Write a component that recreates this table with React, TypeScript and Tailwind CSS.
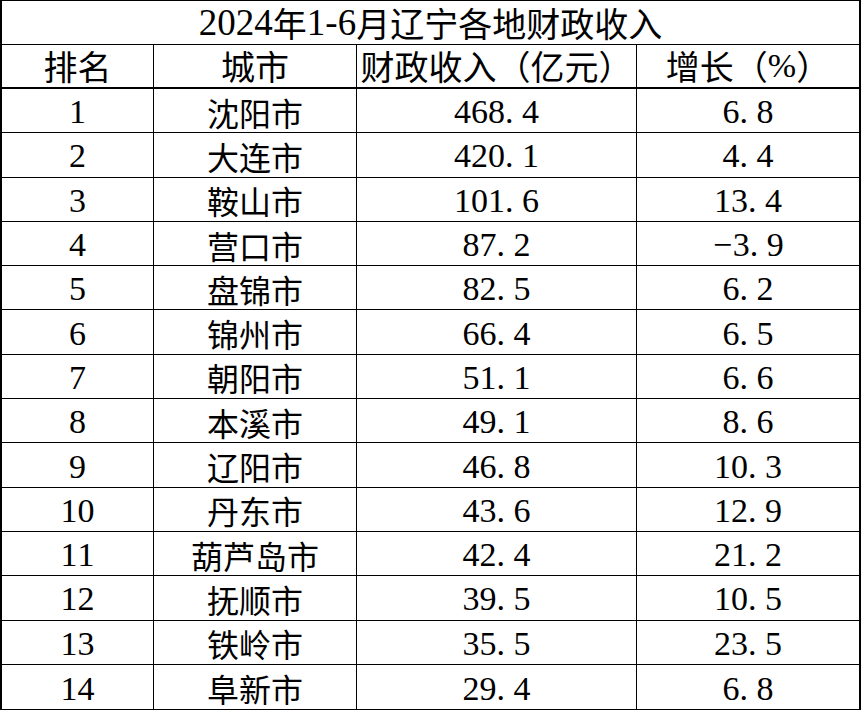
import React from "react";

const rows: [string, string, string, string][] = [
  ["1", "沈阳市", "468.4", "6.8"],
  ["2", "大连市", "420.1", "4.4"],
  ["3", "鞍山市", "101.6", "13.4"],
  ["4", "营口市", "87.2", "-3.9"],
  ["5", "盘锦市", "82.5", "6.2"],
  ["6", "锦州市", "66.4", "6.5"],
  ["7", "朝阳市", "51.1", "6.6"],
  ["8", "本溪市", "49.1", "8.6"],
  ["9", "辽阳市", "46.8", "10.3"],
  ["10", "丹东市", "43.6", "12.9"],
  ["11", "葫芦岛市", "42.4", "21.2"],
  ["12", "抚顺市", "39.5", "10.5"],
  ["13", "铁岭市", "35.5", "23.5"],
  ["14", "阜新市", "29.4", "6.8"],
];

function Num({ v }: { v: string }) {
  const chars = v.split("");
  return (
    <span className="inline-flex font-['Liberation_Serif',serif]">
      {chars.map((c, i) => (
        <span
          key={i}
          className={
            c === "."
              ? "inline-block w-[0.5em] text-left"
              : c === "-"
              ? "inline-block w-[0.6em] text-center"
              : "inline-block w-[0.5em] text-center"
          }
        >
          {c === "-" ? "−" : c}
        </span>
      ))}
    </span>
  );
}

const cjk = "font-['Noto_Sans_CJK_SC','Noto_Sans',sans-serif]";

export default function App() {
  return (
    <div className="w-[862px] h-[710px] bg-white text-black">
      <div className="w-[861px] border-l-2 border-r-2 border-t border-b-2 border-black">
        <div
          className={`h-[44px] border-b border-black flex items-center justify-center text-[34px] leading-[40px] ${cjk}`}
        >
          <span className="font-['Liberation_Serif',serif] text-[37px]">2024</span>
          <span>年</span>
          <span className="font-['Liberation_Serif',serif] text-[37px]">1-6</span>
          <span>月辽宁各地财政收入</span>
        </div>
        <div
          className={`grid grid-cols-[152px_203px_280px_1fr] h-[44px] border-b-2 border-black text-[34px] leading-[40px] ${cjk}`}
        >
          <div className="flex items-center justify-center border-r border-black">排名</div>
          <div className="flex items-center justify-center border-r border-black">城市</div>
          <div className="flex items-center justify-center border-r border-black">
            财政收入（亿元）
          </div>
          <div className="flex items-center justify-center">
            增长（<span className="font-['Liberation_Serif',serif]">%</span>）
          </div>
        </div>
        {rows.map((r, i) => (
          <div
            key={i}
            className={`grid grid-cols-[152px_203px_280px_1fr] h-[44.3px] text-[32px] leading-none ${
              i < rows.length - 1 ? "border-b border-black" : ""
            }`}
          >
            <div className="flex items-center justify-center border-r border-black pt-[3px] text-[34px]">
              <Num v={r[0]} />
            </div>
            <div className={`flex items-center justify-center border-r border-black pt-[2px] ${cjk}`}>
              {r[1]}
            </div>
            <div className="flex items-center justify-center border-r border-black pt-[3px] text-[34px]">
              <Num v={r[2]} />
            </div>
            <div className="flex items-center justify-center pt-[3px] text-[34px]">
              <Num v={r[3]} />
            </div>
          </div>
        ))}
      </div>
    </div>
  );
}
